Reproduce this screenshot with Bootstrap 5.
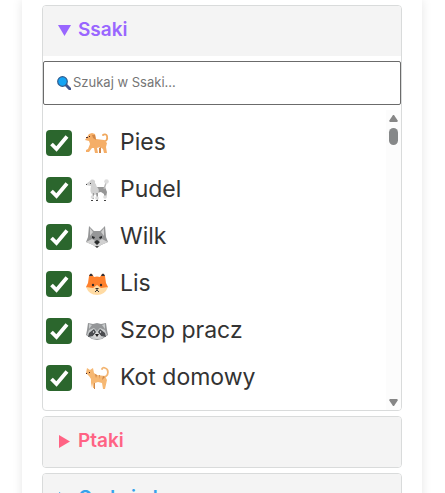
<!DOCTYPE html>
<html lang="pl">
<head>
<meta charset="utf-8">
<meta name="viewport" content="width=device-width, initial-scale=1">
<title>Zwierzęta</title>
<link href="https://cdn.jsdelivr.net/npm/bootstrap@5.3.0/dist/css/bootstrap.min.css" rel="stylesheet">
<style>
body{font-family:Inter,"Open Sans",sans-serif;background:#fff;color:#333;height:100vh;overflow:hidden}
.panel{min-height:100vh;margin:0 23px 0 22px;padding:5px 20px 0;background:#fff;box-shadow:0 0 10px rgba(0,0,0,.1)}
.group{border:1px solid #d9dbdb;border-radius:4px;margin-bottom:5px;overflow:hidden;background:#fff}
.group summary{display:flex;align-items:center;gap:7px;height:50px;padding:0 15px 2px;background:#f4f4f4;font-size:19px;font-weight:600;list-style:none;cursor:pointer}
.group summary::-webkit-details-marker{display:none}
.group summary svg{width:13px;height:13px;fill:currentColor}
.mammals{color:#9966ff}
.birds{color:#ff6384}
.reptiles{color:#36a2eb}
.search{display:flex;align-items:center;height:44px;margin:5px 0;padding:0 13px;border:1px solid #6b6b6b;border-radius:2px}
.search svg{width:14px;height:14px;flex:none}
.search input{width:100%;border:0;outline:0;padding:0 0 0 2px;font-size:13px;background:transparent}
.search input::placeholder{color:#757575;opacity:1}
.list-area{height:300px}
.species{padding:9px 0 0 3px;overflow:hidden}
.species label{display:flex;align-items:center;height:47px;font-size:23px}
.species input{appearance:none;width:26px;height:26px;margin:0 13px 0 0;border-radius:4px;background:#2b662d url("data:image/svg+xml,%3Csvg xmlns='http://www.w3.org/2000/svg' viewBox='0 0 26 26'%3E%3Cpath d='M5.5 14l5 5L21 6.500' fill='none' stroke='white' stroke-width='3.8'/%3E%3C/svg%3E") center/contain}
.species input:not(:checked){background:#fff;border:1px solid #777}
.species svg{width:24px;height:24px;margin-right:11px;flex:none}
.rail{width:15px;background:#fcfcfc;padding:5px 3px 4px}
.rail svg{width:9px;height:7px;fill:#868686;display:block}
.thumb{width:9px;height:17px;border-radius:5px;background:#868889;margin-top:6px}
</style>
<script src="https://cdn.jsdelivr.net/npm/bootstrap@5.3.0/dist/js/bootstrap.bundle.min.js"></script>
</head>
<body>
<main class="panel">
<details class="group" open>
<summary class="mammals"><svg viewBox="0 0 13 13"><path d="M0 1h13L6.500 12z"/></svg>Ssaki</summary>
<div class="search">
<svg viewBox="0 0 14 14"><path d="M9 9l4 4" stroke="#40578f" stroke-width="3" stroke-linecap="round"/><circle cx="5.500" cy="5.500" r="4.800" fill="#14a4f4" stroke="#315b8d" stroke-width="1.200"/></svg>
<input type="text" aria-label="Szukaj w Ssaki" placeholder="Szukaj w Ssaki...">
</div>
<div class="list-area d-flex">
<div class="species flex-grow-1">
<label><input type="checkbox" checked><svg viewBox="0 0 24 24"><path d="M17 10c4 1 6-1 5-5-.5-2-3-2-4-1" fill="none" stroke="#f0a85e" stroke-width="1.800" stroke-linecap="round"/><path d="M2 6l2-3 3-1 3 1 1 5 8 1 3 3-1 4 1 6h-3l-1-4-3-2-3 1 1 5h-3l-1-5-2 0-3 4-3 0 0-2 2-1 2-5-1-3-4-1z" fill="#f5ae67"/><path d="M7 4l3 0 1 5-3-2zM14 17l2-1v6h-2z" fill="#d28747"/><path d="M1 6h2v1H1z" fill="#533"/><path d="M4 5h1v1H4z" fill="#422"/></svg>Pies</label>
<label><input type="checkbox" checked><svg viewBox="0 0 24 24"><path d="M11 9h9l2 5-1 6h-2l0-4-3-2-5 1z" fill="#969696"/><path d="M19 11l2-6" stroke="#bbb" stroke-width="1.500"/><circle cx="21.500" cy="3.500" r="2.300" fill="#ddd"/><path d="M5 3c2-3 6-1 5 2 2 2 1 4 3 5 2 3 0 7-4 7-4-1-4-5-3-9L1 7V6z" fill="#d1d1d1"/><path d="M8 15h1v6H7zM11 15h2v7h-1z" fill="#999"/><circle cx="7.500" cy="19" r="1.800" fill="#ddd"/><circle cx="12" cy="20" r="1.800" fill="#ddd"/><circle cx="20" cy="19" r="1.800" fill="#ddd"/><path d="M1 6h1v1H1zM5 5h1v1H5zM6 22h2v1H6zM11 22h2v1h-2zM19 22h2v1h-2z" fill="#444"/></svg>Pudel</label>
<label><input type="checkbox" checked><svg viewBox="0 0 24 24"><path d="M4 1l5 5h6l5-5 1 11 2 5-7 3-4 3-4-3-7-3 2-5z" fill="#969798"/><path d="M5 3l3 4-3 4zM19 3l-3 4 3 4zM1 17l6-3 5 3 5-3 6 3-7 3-4 3-4-3z" fill="#d0d0d0"/><path d="M7 11l3 1-1 2-2-1zM17 11l-3 1 1 2 2-1zM9 17l3-2 3 2-3 3z" fill="#292b2c"/><path d="M10 21h4l-2 2z" fill="#444"/></svg>Wilk</label>
<label><input type="checkbox" checked><svg viewBox="0 0 24 24"><path d="M4 4q2-5 5 1 3-1 6 0 3-6 5-1l1 7 2 4-5 5-6 2-6-2-5-5 2-4z" fill="#ff812d"/><path d="M4 4q2-5 4 0zM20 4q-2-5-4 0z" fill="#30333b"/><path d="M1 15l7 1 4-3 4 3 7-1q-3 8-11 8T1 15z" fill="#ffdba4"/><circle cx="8" cy="13" r="1.200" fill="#352925"/><circle cx="16" cy="13" r="1.200" fill="#352925"/><path d="M10 16h4l-2 2z" fill="#333"/><path d="M10 20l2-2 2 2" fill="none" stroke="#333"/></svg>Lis</label>
<label><input type="checkbox" checked><svg viewBox="0 0 24 24"><path d="M3 4l5 1 4-1 4 1 5-1 1 7 1 5-6 4-5 1-5-1-6-4 1-5z" fill="#949698"/><path d="M4 5l3 1-3 4zM20 5l-3 1 3 4zM4 11l5-2 3 3 3-3 5 2 2 5-6 4H8l-6-4z" fill="#c9cccd"/><path d="M4 14l5-4 2 3-3 4-5 1zM20 14l-5-4-2 3 3 4 5 1z" fill="#4b4d50"/><path d="M8 17l4-4 4 4-4 3z" fill="#d8d8d8"/><path d="M10 15h4l-2 3z" fill="#222"/><circle cx="8.500" cy="13" r=".7" fill="#fff"/><circle cx="15.500" cy="13" r=".7" fill="#fff"/></svg>Szop pracz</label>
<label><input type="checkbox" checked><svg viewBox="0 0 24 24"><path d="M19 11c5-1 5-8 1-9q-2-1-3 1" fill="none" stroke="#f3b572" stroke-width="1.800" stroke-linecap="round"/><path d="M1 7l1-5 3 2 3-2 1 5 3 2 8 1 2 4-2 9h-2l-1-6-4-1-3 1v5h-2l-1-5-1 5H6l0-9-2-3z" fill="#f6b873"/><path d="M10 8l1 4 1-3zM14 9v4l1-4zM18 10l-1 4 3-3zM9 17l1 0v6H9z" fill="#cf8749"/><path d="M4 6h1v1H4zM1 7h1v1H1z" fill="#422"/></svg>Kot domowy</label>
</div>
<div class="rail d-flex flex-column" aria-hidden="true"><svg viewBox="0 0 9 7"><path d="M4 0h1l4 6-1 1H1L0 6z"/></svg><div class="thumb"></div><svg class="mt-auto" viewBox="0 0 9 7"><path d="M1 0h7l1 1-4 6H4L0 1z"/></svg></div>
</div>
</details>
<details class="group"><summary class="birds"><svg viewBox="0 0 13 13"><path d="M1 0l11 6.500L1 13z"/></svg>Ptaki</summary></details>
<details class="group"><summary class="reptiles"><svg viewBox="0 0 13 13"><path d="M1 0l11 6.500L1 13z"/></svg>Gady i płazy</summary></details>
</main>
</body>
</html>
